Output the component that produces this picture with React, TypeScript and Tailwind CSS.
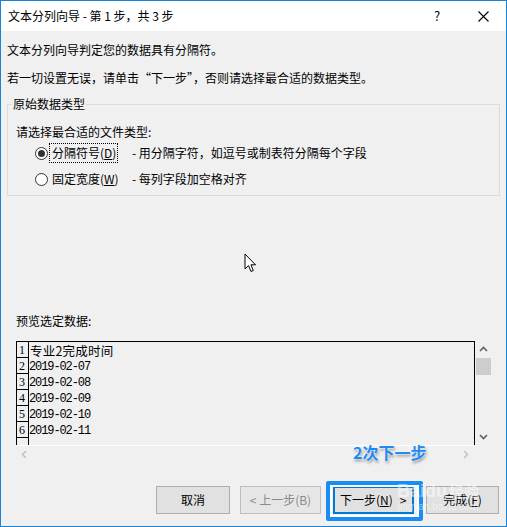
const ui = "font-['Noto_Sans_CJK_SC',sans-serif]";

function Radio({ checked }: { checked?: boolean }) {
    return (
        <span className="flex h-[13px] w-[13px] shrink-0 items-center justify-center rounded-full border border-[#333333] bg-white">
            {checked && <span className="h-[7px] w-[7px] rounded-full bg-[#333333]" />}
        </span>
    );
}

function Chevron({ dir, color }: { dir: 'up' | 'down' | 'left' | 'right'; color: string }) {
    const pts = {
        up: '1,6 4.5,2.5 8,6',
        down: '1,3 4.5,6.5 8,3',
        left: '6,1 2.5,4.5 6,8',
        right: '3,1 6.5,4.5 3,8',
    }[dir];
    return (
        <svg width="9" height="9" viewBox="0 0 9 9">
            <polyline points={pts} fill="none" stroke={color} strokeWidth="1.6" />
        </svg>
    );
}

const rows = ['专业2完成时间', '2019-02-07', '2019-02-08', '2019-02-09', '2019-02-10', '2019-02-11', ''];

export default function App() {
    return (
        <div className={`relative flex h-[527px] w-[507px] flex-col border border-[#1883d7] bg-[#f0f0f0] text-[12px] leading-[16px] text-black ${ui}`}>
            {/* title bar */}
            <div className="flex h-[30px] shrink-0 items-center bg-white pl-[7px]">
                <span className="flex-1">文本分列向导 - 第 1 步，共 3 步</span>
                <span className="w-[46px] text-center text-[13px]">?</span>
                <span className="flex w-[46px] items-center justify-center">
                    <svg width="11" height="11" viewBox="0 0 11 11">
                        <path d="M0.5 0.5 L10.5 10.5 M10.5 0.5 L0.5 10.5" stroke="#000" strokeWidth="1.1" />
                    </svg>
                </span>
            </div>

            <div className="flex flex-col px-[6px]">
                <p className="mt-[11px]">文本分列向导判定您的数据具有分隔符。</p>
                <p className="mt-[12px]">若一切设置无误，请单击“下一步”，否则请选择最合适的数据类型。</p>

                <fieldset className="mt-[10px] w-[493px] border border-[#dcdcdc] pb-[8px]">
                    <legend className="ml-[4px] px-[1px]">原始数据类型</legend>
                    <p className="mt-[12px] pl-[8px]">请选择最合适的文件类型:</p>
                    <div className="mt-[5px] flex h-[16px] items-center pl-[27px]">
                        <Radio checked />
                        <span className="ml-[1px] block h-[20px] w-[69px] whitespace-nowrap border border-dotted border-black px-[2px] leading-[18px]">
                            分隔符号(<span className="underline">D</span>)
                        </span>
                        <span className="ml-[14px]">- 用分隔字符，如逗号或制表符分隔每个字段</span>
                    </div>
                    <div className="mt-[10px] flex h-[16px] items-center pl-[27px]">
                        <Radio />
                        <span className="ml-[1px] block h-[20px] w-[69px] whitespace-nowrap border border-transparent px-[2px] leading-[18px]">
                            固定宽度(<span className="underline">W</span>)
                        </span>
                        <span className="ml-[14px]">- 每列字段加空格对齐</span>
                    </div>
                </fieldset>

                <p className="mt-[117px] pl-[9px]">预览选定数据:</p>

                {/* preview control */}
                <div className="ml-[9px] mt-[12px] flex flex-col">
                    <div className="flex">
                        <div className="h-[104px] w-[459px] overflow-hidden border-x border-t border-black">
                            {rows.map((r, i) => (
                                <div key={i} className="flex h-[16px]">
                                    <span className="flex w-[12px] shrink-0 items-end border-b border-r border-black pl-[2px] font-['Liberation_Serif',serif] text-[12px] leading-[14px]">
                                        {i < 6 ? i + 1 : ''}
                                    </span>
                                    {i === 0 ? (
                                        <span className="pl-[1px] text-[12.5px] leading-[18px] tracking-[0.2px]">{r}</span>
                                    ) : (
                                        <span className="font-['Liberation_Mono',monospace] text-[12px] leading-[18px] tracking-[-1.1px]">{r}</span>
                                    )}
                                </div>
                            ))}
                        </div>
                        <div className="flex h-[104px] w-[16px] flex-col items-center">
                            <div className="flex h-[17px] items-center justify-center">
                                <Chevron dir="up" color="#606060" />
                            </div>
                            <div className="h-[17px] w-[15px] bg-[#cdcdcd]" />
                            <div className="flex-1" />
                            <div className="flex h-[17px] items-center justify-center">
                                <Chevron dir="down" color="#606060" />
                            </div>
                        </div>
                    </div>
                    <div className="flex h-[17px] w-[458px] items-center justify-between border-t border-white px-[4px]">
                        <Chevron dir="left" color="#c2c2c2" />
                        <Chevron dir="right" color="#c2c2c2" />
                    </div>
                </div>
            </div>

            {/* buttons */}
            <div className="mt-[24px] flex justify-end pr-[7px]">
                <button className="h-[28px] w-[74px] border border-[#adadad] bg-[#e1e1e1]">取消</button>
                <button className="ml-[10px] h-[28px] w-[81px] border border-[#bfbfbf] bg-[#e6e6e6] text-[#8a8a8a]">&lt; 上一步(B)</button>
                <div className="relative ml-[12px]">
                    <button className="h-[28px] w-[81px] whitespace-nowrap border-2 border-[#0078d7] bg-[#e1e1e1] pl-[2px] text-left">
                        <span className="ml-[3px]">下一步(<span className="underline">N</span>)</span>
                        <span className="ml-[7px]">&gt;</span>
                    </button>
                    <div className="pointer-events-none absolute -bottom-[7px] -left-[7px] -right-[9px] -top-[5px] rounded-[2px] border-4 border-[#1a8cf5] shadow-[inset_0_0_0_2px_white]" />
                </div>
                <button className="ml-[12px] h-[28px] w-[73px] border border-[#adadad] bg-[#e1e1e1]">
                    完成(<span className="underline">F</span>)
                </button>
            </div>

            {/* annotation */}
            <span className="absolute left-[352px] top-[441px] text-[16px] font-bold leading-[20px] text-[#2288f2] [text-shadow:0_0_2px_#fff,0_0_2px_#fff,1px_2px_3px_rgba(0,0,0,0.45)]">
                2次下一步
            </span>

            {/* watermark */}
            <div className="pointer-events-none absolute left-[396px] top-[480px] flex flex-col items-center text-white/50">
                <span className="font-['Liberation_Sans',sans-serif] text-[18px] font-bold leading-[20px]">
                    Baidu<span className={`${ui} ml-[2px] text-[15px]`}>经验</span>
                </span>
                <span className="font-['Liberation_Sans',sans-serif] text-[10px] leading-[12px]">jingyan.baidu.com</span>
            </div>

            {/* mouse cursor */}
            <svg className="pointer-events-none absolute left-[243px] top-[252px]" width="13" height="21" viewBox="0 0 13 21">
                <path d="M1 1 L1 16 L4.5 12.6 L7 18.5 L9.3 17.5 L6.9 11.8 L11.5 11.8 Z" fill="white" stroke="black" strokeWidth="1" strokeLinejoin="miter" />
            </svg>
        </div>
    );
}
